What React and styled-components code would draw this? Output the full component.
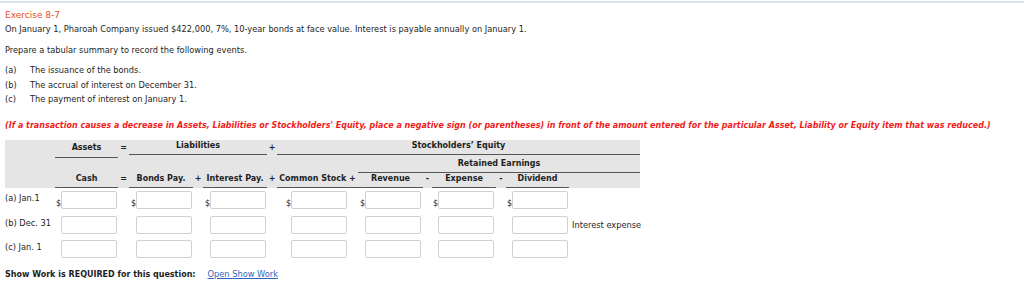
import React from 'react'
import styled, { createGlobalStyle } from 'styled-components'

const GlobalStyle = createGlobalStyle`
    body {
        margin: 0;
        background: #fff;
        font-family: "DejaVu Sans", Verdana, sans-serif;
        font-size: 8.25px;
        color: #1e1e1e;
    }
`

const Page = styled.div`
    width: 1024px;
    height: 284px;
    overflow: hidden;
    border-top: 2px solid #dae4ef;
    margin-top: 1px;
    padding: 5px 5px 0;
    box-sizing: border-box;
`
const Title = styled.div`
    color: #e2501a;
    font-size: 9px;
    line-height: 14px;
`
const Para = styled.p`
    margin: ${props => props.$top || 0}px 0 0;
    line-height: 14px;
`
const EventList = styled.div`
    margin-top: 6px;
    display: grid;
    grid-template-columns: 25px auto;
    grid-auto-rows: 14.5px;
    align-items: center;
`
const Note = styled.p`
    margin: 12px 0 0;
    color: #f01c1c;
    font-size: 8px;
    font-weight: bold;
    font-style: italic;
    line-height: 14px;
`

const Sheet = styled.div`
    margin-top: 7px;
    display: grid;
    grid-template-columns: 50px 63px 11px 64px 10px 64px 10px 81px 65px 9px 64px 10px 63px 71px;
    width: 635px;
`
const HeadBand = styled.div`
    grid-column: 1 / -1;
    grid-row: 1 / 4;
    background: #e5e5e5;
    height: 48px;
`
const HeadCell = styled.div`
    grid-column: ${props => props.$col};
    grid-row: ${props => props.$row};
    align-self: end;
    text-align: center;
    font-size: 8px;
    font-weight: bold;
    line-height: 12px;
    padding-bottom: ${props => props.$pad || 2}px;
    margin-bottom: ${props => props.$lift || 0}px;
    border-bottom: 1px solid #555;
    white-space: nowrap;
`
const Sign = styled.div`
    grid-column: ${props => props.$col};
    grid-row: ${props => props.$row};
    align-self: end;
    text-align: center;
    font-size: 8px;
    font-weight: bold;
    line-height: 12px;
    padding-bottom: ${props => props.$pad || 3}px;
`
const RowLabel = styled.div`
    grid-column: 1;
    align-self: center;
    line-height: 12px;
    padding-bottom: 3px;
    white-space: nowrap;
`
const Cell = styled.div`
    display: flex;
    align-items: flex-end;
    justify-content: flex-end;
    padding-right: ${props => props.$right || 1}px;
    height: 18px;
    margin-top: ${props => props.$top}px;
`
const Dollar = styled.span`
    width: 5px;
    line-height: 10px;
    font-size: 8px;
`
const Input = styled.input`
    box-sizing: border-box;
    width: 56px;
    height: 18px;
    margin: 0;
    padding: 0 3px;
    border: 1px solid #d0d0d0;
    border-radius: 2px;
    background: #fff;
    font: inherit;
`
const Side = styled.div`
    grid-column: 14;
    align-self: center;
    padding-left: 3px;
    line-height: 12px;
    white-space: nowrap;
`
const Footer = styled.div`
    margin-top: 9px;
    line-height: 14px;
`
const Required = styled.span`
    font-size: 8px;
    font-weight: bold;
    margin-right: 12px;
`
const ShowLink = styled.a`
    color: #2f66bb;
    text-decoration: underline;
`

const columns = [
    { col: 2, right: 0 },
    { col: 4, right: 1 },
    { col: 6, right: 1 },
    { col: 8, right: 11 },
    { col: 9, right: 2 },
    { col: 11, right: 2 },
    { col: 13, right: 1 },
]

const rows = [
    { label: '(a) Jan.1', dollar: true, top: 3, side: '' },
    { label: '(b) Dec. 31', dollar: false, top: 7, side: 'Interest expense' },
    { label: '(c) Jan. 1', dollar: false, top: 6, side: '' },
]

const App = () => {
    return (
        <>
            <GlobalStyle />
            <Page>
                <Title>Exercise 8-7</Title>
                <Para>On January 1, Pharoah Company issued $422,000, 7%, 10-year bonds at face value. Interest is payable annually on January 1.</Para>
                <Para $top={7}>Prepare a tabular summary to record the following events.</Para>
                <EventList>
                    <span>(a)</span><span>The issuance of the bonds.</span>
                    <span>(b)</span><span>The accrual of interest on December 31.</span>
                    <span>(c)</span><span>The payment of interest on January 1.</span>
                </EventList>
                <Note>(If a transaction causes a decrease in Assets, Liabilities or Stockholders' Equity, place a negative sign (or parentheses) in front of the amount entered for the particular Asset, Liability or Equity item that was reduced.)</Note>

                <Sheet>
                    <HeadBand />
                    <HeadCell $col="2" $row="1" $pad={3}>Assets</HeadCell>
                    <Sign $col="3" $row="1" $pad={4}>=</Sign>
                    <HeadCell $col="4 / 7" $row="1" $lift={3}>Liabilities</HeadCell>
                    <Sign $col="7" $row="1" $pad={4}>+</Sign>
                    <HeadCell $col="8 / 15" $row="1" $lift={3}>Stockholders’ Equity</HeadCell>
                    <HeadCell $col="9 / 15" $row="2" $pad={2}>Retained Earnings</HeadCell>

                    <HeadCell $col="2" $row="3">Cash</HeadCell>
                    <Sign $col="3" $row="3">=</Sign>
                    <HeadCell $col="4" $row="3">Bonds Pay.</HeadCell>
                    <Sign $col="5" $row="3">+</Sign>
                    <HeadCell $col="6" $row="3">Interest Pay.</HeadCell>
                    <Sign $col="7" $row="3">+</Sign>
                    <HeadCell $col="8" $row="3">Common Stock +</HeadCell>
                    <HeadCell $col="9" $row="3">Revenue</HeadCell>
                    <Sign $col="10" $row="3">-</Sign>
                    <HeadCell $col="11" $row="3">Expense</HeadCell>
                    <Sign $col="12" $row="3">-</Sign>
                    <HeadCell $col="13" $row="3">Dividend</HeadCell>

                    {rows.map(row => (
                        <React.Fragment key={row.label}>
                            <RowLabel style={{ marginTop: row.top }}>{row.label}</RowLabel>
                            {columns.map(c => (
                                <Cell key={c.col} $top={row.top} $right={c.right} style={{ gridColumn: c.col }}>
                                    {row.dollar && <Dollar>$</Dollar>}
                                    <Input type="text" />
                                </Cell>
                            ))}
                            <Side style={{ marginTop: row.top }}>{row.side}</Side>
                        </React.Fragment>
                    ))}
                </Sheet>

                <Footer>
                    <Required>Show Work is REQUIRED for this question:</Required>
                    <ShowLink href="#">Open Show Work</ShowLink>
                </Footer>
            </Page>
        </>
    )
}

export default App
